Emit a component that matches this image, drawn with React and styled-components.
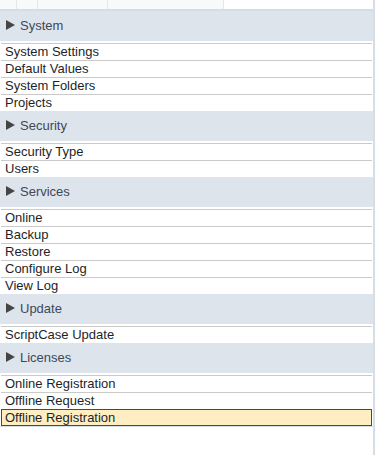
import * as React from 'react'
import styled, { createGlobalStyle } from 'styled-components'

const GlobalStyle = createGlobalStyle`
  html, body {
    margin: 0;
    padding: 0;
    background: #ffffff;
  }
  body {
    font-family: "Liberation Sans", Arial, sans-serif;
    font-size: 13px;
  }
`

const Frame = styled.div`
  width: 373px;
  min-height: 455px;
  border-right: 2px solid #d5dee6;
  background: #ffffff;
`

const TopStrip = styled.div`
  display: flex;
  height: 9px;
  border-bottom: 2px solid #d3dde6;
`

const StripCell = styled.div`
  width: ${({ w }) => w}px;
  background: #f7f9fb;
  border-right: 1px solid #e4e8ed;
`

const StripFill = styled.div`
  flex: 1;
  background: #ffffff;
`

const Menu = styled.div`
  border-bottom: 1px solid #d5dee6;
`

const Header = styled.div`
  display: flex;
  align-items: center;
  gap: 5px;
  height: 28px;
  padding: 0 0 2px 6px;
  margin-bottom: 2px;
  background: #dee4ec;
  color: #3d4859;
  font-size: 13px;
`

const Arrow = styled.svg`
  width: 9px;
  height: 10px;
  flex: none;
`

const Item = styled.div`
  height: 16px;
  line-height: 16px;
  margin: 0 1px;
  padding-left: 4px;
  border-top: 1px solid #cacaca;
  color: #1d1f2a;
  white-space: nowrap;
  cursor: pointer;
  ${({ active }) => active && `
    height: 15px;
    line-height: 15px;
    padding-left: 3px;
    background: #ffeec1;
    border: 1px solid #3e4a5a;
  `}
`

const sections = [
  { title: 'System', items: ['System Settings', 'Default Values', 'System Folders', 'Projects'] },
  { title: 'Security', items: ['Security Type', 'Users'] },
  { title: 'Services', items: ['Online', 'Backup', 'Restore', 'Configure Log', 'View Log'] },
  { title: 'Update', items: ['ScriptCase Update'] },
  { title: 'Licenses', items: ['Online Registration', 'Offline Request', 'Offline Registration'] }
]

const STRIP_CELLS = [16, 20, 69, 115]

export default function App () {
  const active = 'Offline Registration'

  return (
    <>
      <GlobalStyle />
      <Frame>
        <TopStrip>
          {STRIP_CELLS.map((w, i) => <StripCell key={i} w={w} />)}
          <StripFill />
        </TopStrip>
        <Menu>
          {sections.map(section => (
            <div key={section.title}>
              <Header>
                <Arrow viewBox='0 0 9 10'>
                  <polygon points='0,0 9,5 0,10' fill='#454545' />
                </Arrow>
                {section.title}
              </Header>
              {section.items.map(item => (
                <Item key={item} active={item === active}>{item}</Item>
              ))}
            </div>
          ))}
        </Menu>
      </Frame>
    </>
  )
}
